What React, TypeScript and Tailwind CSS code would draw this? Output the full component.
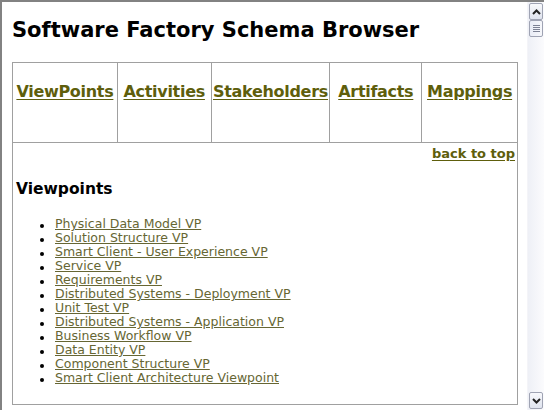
import React from "react";

const items = [
  "Physical Data Model VP",
  "Solution Structure VP",
  "Smart Client - User Experience VP",
  "Service VP",
  "Requirements VP",
  "Distributed Systems - Deployment VP",
  "Unit Test VP",
  "Distributed Systems - Application VP",
  "Business Workflow VP",
  "Data Entity VP",
  "Component Structure VP",
  "Smart Client Architecture Viewpoint",
];

const heads = [
  { t: "ViewPoints", w: "w-[104px]" },
  { t: "Activities", w: "w-[94px]" },
  { t: "Stakeholders", w: "w-[119px]" },
  { t: "Artifacts", w: "w-[92px]" },
  { t: "Mappings", w: "w-[96px]" },
];

function Scrollbar() {
  return (
    <div className="w-[17px] flex flex-col bg-gradient-to-r from-[#eef0f6] to-[#fbfbfd] border-l border-[#f4f4f8]">
      <div className="h-[17px] mt-[1px] mx-[1px] border border-[#9fa3b3] rounded-[2px] bg-gradient-to-b from-[#f8f9fc] to-[#dfe3ee] flex items-center justify-center">
        <svg width="9" height="6" viewBox="0 0 9 6">
          <path d="M1 5 L4.5 1.5 L8 5" stroke="#222" strokeWidth="2" fill="none" />
        </svg>
      </div>
      <div className="h-[17px] mx-[1px] border border-[#9fa3b3] rounded-[2px] bg-gradient-to-r from-[#e9ecf5] to-[#f6f7fb] flex flex-col items-center justify-center gap-[1px]">
        <div className="w-[7px] h-[1px] bg-[#7d8294]" />
        <div className="w-[7px] h-[1px] bg-[#7d8294]" />
        <div className="w-[7px] h-[1px] bg-[#7d8294]" />
        <div className="w-[7px] h-[1px] bg-[#7d8294]" />
      </div>
      <div className="flex-1" />
      <div className="h-[17px] mb-[1px] mx-[1px] border border-[#9fa3b3] rounded-[2px] bg-gradient-to-b from-[#f8f9fc] to-[#dfe3ee] flex items-center justify-center">
        <svg width="9" height="6" viewBox="0 0 9 6">
          <path d="M1 1 L4.5 4.5 L8 1" stroke="#222" strokeWidth="2" fill="none" />
        </svg>
      </div>
    </div>
  );
}

export default function App() {
  return (
    <div
      className="w-[544px] h-[410px] bg-white border-l-2 border-t-2 border-[#828282] flex overflow-hidden text-black"
      style={{ fontFamily: "Verdana, 'DejaVu Sans', sans-serif" }}
    >
      <div className="flex-1 overflow-hidden pl-[10px]">
        <h1 className="text-[21px] leading-[24px] font-bold mt-[16px] mb-[20px] tracking-[0px]">
          Software Factory Schema Browser
        </h1>
        <div className="w-[506px] border border-[#a0a0a0]">
          <div className="flex h-[79px]">
            {heads.map((h, i) => (
              <div
                key={h.t}
                className={`${h.w} ${i > 0 ? "border-l border-[#a0a0a0]" : ""} flex justify-center pt-[19px]`}
              >
                <a className="text-[16px] leading-[20px] font-bold text-[#5e5e0c] underline underline-offset-[2px] tracking-[-0.3px]">
                  {h.t}
                </a>
              </div>
            ))}
          </div>
          <div className="border-t border-[#a0a0a0] h-[262px] pl-[3px] pr-[2px]">
            <div className="flex justify-end pt-[3px]">
              <a className="text-[13px] leading-[16px] font-bold text-[#5e5e0c] underline underline-offset-[2px]">
                back to top
              </a>
            </div>
            <h3 className="text-[15.5px] leading-[20px] font-bold mt-[17px] mb-[18px]">Viewpoints</h3>
            <ul className="pl-[39px]">
              {items.map((t) => (
                <li key={t} className="flex items-center text-[12.5px] leading-[14px] relative">
                  <span className="absolute -left-[15px] top-[7px] w-[4px] h-[4px] bg-black rounded-full" />
                  <a className="text-[#666633] underline underline-offset-[1px]">{t}</a>
                </li>
              ))}
            </ul>
          </div>
        </div>
      </div>
      <Scrollbar />
    </div>
  );
}
